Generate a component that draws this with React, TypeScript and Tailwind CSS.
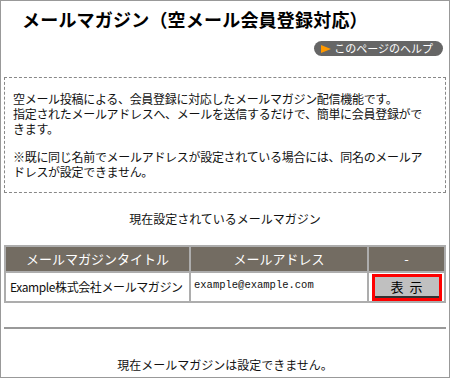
import React from 'react';

const jp = { fontFamily: '"Noto Sans CJK JP", "Noto Sans", sans-serif' };

function HelpButton() {
  return (
    <a className="flex items-center h-[15px] pl-[7px] pr-[10px] rounded-full bg-[#666666] text-white text-[11px] leading-none gap-[3px]">
      <svg width="10" height="8" viewBox="0 0 10 8">
        <polygon points="0,0 10,4 0,8" fill="#ff9900" />
      </svg>
      <span>このページのヘルプ</span>
    </a>
  );
}

export default function App() {
  return (
    <div className="w-[450px] h-[378px] bg-white border border-[#999999] px-[3px] text-[#111111] overflow-hidden" style={jp}>
      <h1 className="pt-[6px] pl-[18px] text-[18px] leading-[24px] font-bold tracking-[0.2px] text-black">
        メールマガジン（空メール会員登録対応）
      </h1>
      <div className="flex justify-end mt-[10px] pr-[3px]">
        <HelpButton />
      </div>

      <div className="mt-[21px] h-[116px] border border-dashed border-[#888888] pl-[8px] pt-[13px] text-[12px] leading-[15px] whitespace-nowrap tracking-[-0.3px]">
        <p>空メール投稿による、会員登録に対応したメールマガジン配信機能です。</p>
        <p>指定されたメールアドレスへ、メールを送信するだけで、簡単に会員登録がで</p>
        <p>きます。</p>
        <p className="mt-[13px]">※既に同じ名前でメールアドレスが設定されている場合には、同名のメールア</p>
        <p>ドレスが設定できません。</p>
      </div>

      <p className="mt-[18px] text-center text-[12px] leading-[16px]">現在設定されているメールマガジン</p>

      <table className="mt-[18px] w-[442px] border-collapse text-[12px]">
        <thead>
          <tr className="bg-[#736c62] text-white text-[13px]">
            <th className="w-[185px] h-[26px] border-2 border-[#adadad] font-normal">メールマガジンタイトル</th>
            <th className="w-[178px] border-2 border-[#adadad] font-normal">メールアドレス</th>
            <th className="border-2 border-[#adadad] font-normal">-</th>
          </tr>
        </thead>
        <tbody>
          <tr className="h-[30px]">
            <td className="border-2 border-[#adadad] pl-[4px] whitespace-nowrap tracking-[-0.4px]">Example株式会社メールマガジン</td>
            <td className="border-2 border-[#adadad] pl-[3px] pb-[2px] text-[10.5px]" style={{ fontFamily: '"Liberation Mono", monospace' }}>
              example@example.com
            </td>
            <td className="border-2 border-[#adadad] px-[2px]">
              <div className="border-[3px] border-[#ff0000] mx-auto w-[70px]">
                <button className="w-full h-[21px] bg-[#c0c0c0] border-b-2 border-[#333333] text-[13px] leading-none tracking-[6px] pl-[6px] text-black">
                  表示
                </button>
              </div>
            </td>
          </tr>
        </tbody>
      </table>

      <div className="mt-[24px] h-[2px] bg-[#999999]" />

      <p className="mt-[28px] text-center text-[12px] leading-[16px]">現在メールマガジンは設定できません。</p>
    </div>
  );
}
